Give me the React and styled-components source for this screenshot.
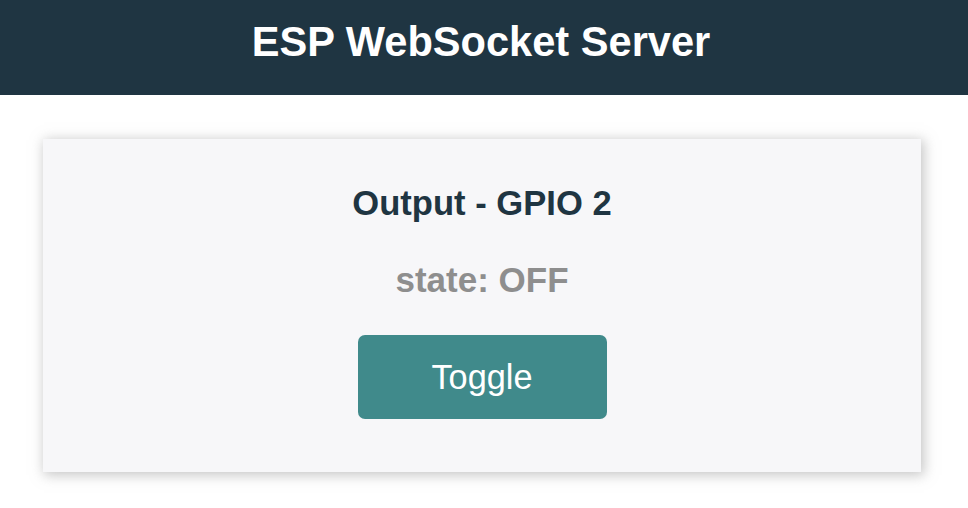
import styled, { createGlobalStyle } from 'styled-components';

const GlobalStyle = createGlobalStyle`
  html, body {
    margin: 0;
    padding: 0;
    background: #ffffff;
  }
  body {
    font-family: 'Liberation Sans', Arial, Helvetica, sans-serif;
    text-align: center;
  }
`;

const TopNav = styled.header`
  height: 95px;
  box-sizing: border-box;
  padding: 18px 6px 0 0;
  background-color: #1f3542;
  overflow: hidden;
`;

const Title = styled.h1`
  margin: 0;
  font-size: 41.6px;
  line-height: 48px;
  font-weight: bold;
  color: #ffffff;
`;

const Content = styled.main`
  padding: 44px 47px 36px 43px;
`;

const Card = styled.section`
  display: flex;
  flex-direction: column;
  align-items: center;
  padding: 44px 0 53px;
  background-color: #f7f7f9;
  box-shadow: 2px 2px 12px 1px rgba(140, 140, 140, 0.5);
`;

const CardTitle = styled.h2`
  margin: 0;
  font-size: 34.6px;
  line-height: 40px;
  font-weight: bold;
  color: #1f3542;
`;

const State = styled.p`
  margin: 37px 0 0;
  font-size: 35px;
  line-height: 40px;
  font-weight: bold;
  color: #8e8e8e;
`;

const ToggleButton = styled.button`
  display: flex;
  align-items: center;
  justify-content: center;
  margin-top: 35px;
  width: 249px;
  height: 84px;
  padding: 0;
  border: none;
  border-radius: 7px;
  outline: none;
  background-color: #408a8b;
  color: #ffffff;
  font-family: 'Liberation Sans', Arial, Helvetica, sans-serif;
  font-size: 34.3px;
  cursor: pointer;
`;

export default function App() {
  return (
    <>
      <GlobalStyle />
      <TopNav>
        <Title>ESP WebSocket Server</Title>
      </TopNav>
      <Content>
        <Card>
          <CardTitle>Output - GPIO 2</CardTitle>
          <State>state: OFF</State>
          <ToggleButton type="button">Toggle</ToggleButton>
        </Card>
      </Content>
    </>
  );
}
